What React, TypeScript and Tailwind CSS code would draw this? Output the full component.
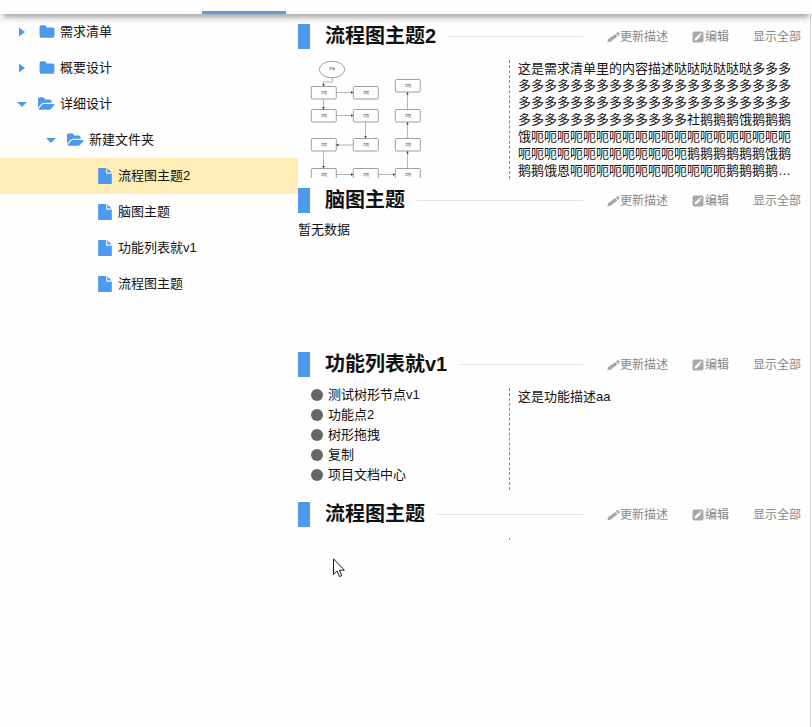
import React from "react";

const FOLDER =
  "M1728 608v704q0 92-66 158t-158 66h-1216q-92 0-158-66t-66-158v-960q0-92 66-158t158-66h320q92 0 158 66t66 158v32h672q92 0 158 66t66 158z";
const FOLDER_OPEN =
  "M1879 952q0 31-31 66l-336 396q-43 51-120.5 86.5t-143.5 35.5h-1088q-34 0-60.5-13t-26.5-43q0-31 31-66l336-396q43-51 120.5-86.5t143.5-35.5h1088q34 0 60.5 13t26.5 43zm-343-344v160h-832q-94 0-197 47.5t-164 119.5l-337 396-5 6q0-4-.5-12.5t-.5-12.5v-960q0-92 66-158t158-66h320q92 0 158 66t66 158v32h544q92 0 158 66t66 158z";
const FILE =
  "M1152 512v-472q22 14 36 28l408 408q14 14 28 36h-472zm-128 32q0 40 28 68t68 28h544v1056q0 40-28 68t-68 28h-1344q-40 0-68-28t-28-68v-1600q0-40 28-68t68-28h800v544z";

type IconKind = "folder" | "open" | "file";

function NodeIcon({ kind }: { kind: IconKind }) {
  if (kind === "open") {
    return (
      <svg className="h-4 w-[17px] shrink-0" viewBox="0 0 1920 1792" fill="#4d99ee" aria-hidden="true">
        <path d={FOLDER_OPEN} />
      </svg>
    );
  }
  return (
    <svg className="h-4 w-4 shrink-0" viewBox="0 0 1792 1792" fill="#4d99ee" aria-hidden="true">
      <path d={kind === "folder" ? FOLDER : FILE} />
    </svg>
  );
}

function Caret({ open }: { open: boolean }) {
  return (
    <svg className="h-[10px] w-[10px] shrink-0" viewBox="0 0 10 10" fill="#4d99ee" aria-hidden="true">
      <path d={open ? "M0 3h10l-5 5z" : "M2 0.5v9l6-4.5z"} />
    </svg>
  );
}

interface TreeNode {
  label: string;
  kind: IconKind;
  indent: string;
  selected?: boolean;
}

const TREE: TreeNode[] = [
  { label: "需求清单", kind: "folder", indent: "pl-[17px]" },
  { label: "概要设计", kind: "folder", indent: "pl-[17px]" },
  { label: "详细设计", kind: "open", indent: "pl-[17px]" },
  { label: "新建文件夹", kind: "open", indent: "pl-[46px]" },
  { label: "流程图主题2", kind: "file", indent: "pl-[97px]", selected: true },
  { label: "脑图主题", kind: "file", indent: "pl-[97px]" },
  { label: "功能列表就v1", kind: "file", indent: "pl-[97px]" },
  { label: "流程图主题", kind: "file", indent: "pl-[97px]" },
];

function Sidebar() {
  return (
    <aside className="w-[298px] shrink-0">
      <ul>
        {TREE.map((n) => (
          <li key={n.label}>
            <button
              type="button"
              className={`flex h-9 w-full items-center text-left ${n.indent} ${n.selected ? "bg-[#ffedb8]" : ""}`}
            >
              {n.kind !== "file" && <Caret open={n.kind === "open"} />}
              <span className={`flex items-center gap-[5px] ${n.kind === "file" ? "" : n.kind === "open" ? "ml-[11px]" : "ml-3"}`}>
                <NodeIcon kind={n.kind} />
                <span>{n.label}</span>
              </span>
            </button>
          </li>
        ))}
      </ul>
    </aside>
  );
}

function PencilIcon() {
  return (
    <svg className="h-3 w-[13px]" viewBox="0 0 13 12" fill="#a8a8a8" aria-hidden="true">
      <path d="M0.3 11.6l1-3.5 7-5.2 2 2.6-6.8 5.2z" />
      <path d="M9 2.4l1-0.8q1.3-0.7 2.2 0.3t0 2.2l-1.2 0.9z" />
    </svg>
  );
}

function EditIcon() {
  return (
    <svg className="h-3 w-3" viewBox="0 0 12 12" aria-hidden="true">
      <rect x="0.5" y="0.5" width="11" height="11" rx="2" fill="#a8a8a8" />
      <path d="M2.6 9.5l0.6-2.2 3.7-3.7 1.6 1.6-3.7 3.7z" fill="#fff" />
      <path d="M7.4 3.1l0.6-0.6q0.7-0.4 1.2 0.1t0.1 1.2l-0.4 0.7z" fill="#fff" />
    </svg>
  );
}

function Section({ title, className, children }: { title: string; className: string; children: React.ReactNode }) {
  return (
    <section className={className}>
      <header className="flex h-[25px] items-center pr-[9px]">
        <span className="h-full w-3 bg-[#4d99ee]" />
        <h2 className="mr-3 ml-[15px] text-[20px] leading-[25px] font-bold text-[#111]">{title}</h2>
        <span className="h-px flex-1 bg-[#e2e2e2]" />
        <div className="ml-6 flex items-center gap-6 text-[12px] text-[#888]">
          <button type="button" className="flex items-center">
            <PencilIcon />
            更新描述
          </button>
          <button type="button" className="flex items-center gap-px">
            <EditIcon />
            编辑
          </button>
          <button type="button">显示全部</button>
        </div>
      </header>
      {children}
    </section>
  );
}

const BOXES: [number, number][] = [
  [13, 26], [55, 26], [97, 19],
  [13, 49], [55, 49], [97, 49],
  [13, 78], [55, 78], [97, 78],
  [13, 108], [55, 108], [97, 108],
];

function Flowchart() {
  return (
    <svg className="h-[118px] w-[124px]" viewBox="0 0 124 118" role="img" aria-label="流程图">
      <g fill="none" stroke="#777" strokeWidth="0.7">
        <ellipse cx="34" cy="9.5" rx="12.7" ry="8.3" />
        {BOXES.map(([x, y]) => (
          <rect key={`${x}-${y}`} x={x + 0.3} y={y + 0.5} width="25" height="12.5" rx="1.2" />
        ))}
      </g>
      <g fill="none" stroke="#999" strokeWidth="0.7">
        <path d="M34.5 18v4h-9v4M25.5 39v10M25.5 91v17M67.5 62v16M38 32.5h17M38 55.5h17M55 85h-17M38 114.5h17M80 114.5h17M109.5 108v-17M109.5 78v-16M109.5 49v-17" />
      </g>
      <path
        fill="#333"
        d="M24.3 24h2.4l-1.2 2.4zM24.3 47h2.4l-1.2 2.4zM24.3 106h2.4l-1.2 2.4zM66.3 76h2.4l-1.2 2.4zM53 31.3v2.4l2.4-1.2zM53 54.3v2.4l2.4-1.2zM40.4 83.8v2.4l-2.4-1.2zM53 113.3v2.4l2.4-1.2zM95 113.3v2.4l2.4-1.2zM108.3 93.4h2.4l-1.2-2.4zM108.3 64.4h2.4l-1.2-2.4zM108.3 34.4h2.4l-1.2-2.4z"
      />
      <g fill="#444" fontSize="3" textAnchor="middle">
        <text x="34" y="10">开始</text>
        {BOXES.map(([x, y]) => (
          <text key={`${x}-${y}`} x={x + 13} y={y + 8}>流程</text>
        ))}
      </g>
    </svg>
  );
}

const DESCRIPTION =
  "这是需求清单里的内容描述" +
  "哒".repeat(6) +
  "多".repeat(58) +
  "社鹅鹅鹅饿鹅鹅鹅饿" +
  "呃".repeat(33) +
  "鹅鹅鹅鹅鹅鹅饿鹅鹅鹅饿恩" +
  "呃".repeat(12) +
  "鹅鹅鹅鹅…";

const FEATURES = ["测试树形节点v1", "功能点2", "树形拖拽", "复制", "项目文档中心"];

export default function App() {
  return (
    <div className="flex min-h-screen flex-col bg-[#fefefe] font-['Liberation_Sans','Noto_Sans_CJK_SC',sans-serif] text-[13px] text-[#111]">
      <nav className="z-10 flex h-[14px] items-end bg-[#fefefe] pl-[202px] shadow-[0_6px_6px_-3px_rgba(0,0,0,0.4)]">
        <span className="h-[3px] w-[84px] bg-[#5a9cdc]" />
      </nav>
      <div className="mr-px flex flex-1 border-r border-[#d6d6d6]">
        <Sidebar />
        <main className="min-w-0 flex-1 pt-[10px]">
          <Section title="流程图主题2" className="pb-[9px]">
            <div className="mt-[11px] flex">
              <div className="w-[211px] shrink-0">
                <Flowchart />
              </div>
              <div className="min-w-0 flex-1 border-l border-dashed border-[#888] pr-4 pl-2">
                <p className="leading-[17px] break-all">{DESCRIPTION}</p>
              </div>
            </div>
          </Section>
          <Section title="脑图主题" className="min-h-[164px]">
            <p className="pt-2 leading-[18px]">暂无数据</p>
          </Section>
          <Section title="功能列表就v1" className="pb-3">
            <div className="flex">
              <ul className="w-[211px] shrink-0 pt-2 pl-[13px]">
                {FEATURES.map((f) => (
                  <li key={f} className="flex h-5 items-center gap-[5px]">
                    <span className="h-3 w-3 rounded-full bg-[#666]" />
                    {f}
                  </li>
                ))}
              </ul>
              <div className="mt-[11px] h-[102px] flex-1 border-l border-dashed border-[#888] pr-4 pl-2">
                <p className="leading-[17px]">这是功能描述aa</p>
              </div>
            </div>
          </Section>
          <Section title="流程图主题" className="pb-3">
            <div className="mt-[11px] ml-[211px] h-[2px] border-l border-[#888]" />
          </Section>
        </main>
      </div>
      <svg className="absolute top-[558px] left-[333px] h-5 w-3" viewBox="0 0 12 20" aria-hidden="true">
        <path d="M0.5 0.8v15.6l3.6-3.4 2.4 5.6 2.3-1-2.4-5.4h5z" fill="#fff" stroke="#1a1a2a" strokeWidth="1" />
      </svg>
    </div>
  );
}
